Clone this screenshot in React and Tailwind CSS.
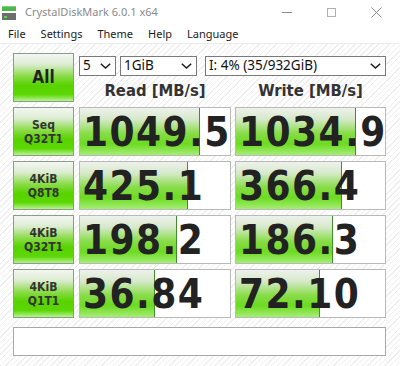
const results = [
  { size: "Seq", mode: "Q32T1", read: "1049.5", readBar: 120, write: "1034.9", writeBar: 120 },
  { size: "4KiB", mode: "Q8T8", read: "425.1", readBar: 108, write: "366.4", writeBar: 106 },
  { size: "4KiB", mode: "Q32T1", read: "198.2", readBar: 97, write: "186.3", writeBar: 97 },
  { size: "4KiB", mode: "Q1T1", read: "36.84", readBar: 75, write: "72.10", writeBar: 84 },
];

const bold = "font-['DejaVu_Sans_Condensed','DejaVu_Sans',sans-serif] font-bold";
const greenBtn =
  "border border-[#8c9c8a] bg-[linear-gradient(180deg,#f4f6f2_0%,#dcedd2_22%,#8edc4e_46%,#58d300_66%,#5cd704_86%,#b8f292_100%)]";

function Chevron() {
  return (
    <svg width="11" height="6" viewBox="0 0 11 6" className="shrink-0">
      <polyline points="0.8,0.8 5.5,5 10.2,0.8" fill="none" stroke="#1a1a1a" strokeWidth="1.5" />
    </svg>
  );
}

function Select({ value, className }) {
  return (
    <div className={`h-[20px] bg-white border border-[#7a7a7a] flex items-center justify-between pl-[3px] pr-[4px] ${className}`}>
      <span className="text-[13.5px] leading-none text-[#111]">{value}</span>
      <Chevron />
    </div>
  );
}

function ResultCell({ value, bar }) {
  return (
    <div className="relative bg-white border border-[#b9b9b9] flex items-center overflow-hidden">
      <div
        className="absolute left-0 top-0 bottom-0 border-r border-[#3f8f2a] bg-[linear-gradient(180deg,#eef1ec_0%,#d6e9ca_24%,#88dc48_54%,#6cdb20_76%,#a6ed76_100%)]"
        style={{ width: bar }}
      />
      <span className={`relative pl-[3px] text-[40px] leading-none tracking-[1.5px] text-[#222] ${bold}`}>{value}</span>
    </div>
  );
}

function AppIcon() {
  return (
    <svg width="14" height="16" viewBox="0 0 14 16">
      <rect x="0" y="1" width="14" height="5" fill="#4cb848" />
      <rect x="0" y="1" width="14" height="1" fill="#7fd07a" />
      <rect x="0" y="8" width="14" height="7" fill="#6d6d6d" />
      <rect x="2" y="11" width="3" height="2" fill="#5fd050" />
    </svg>
  );
}

export default function App() {
  return (
    <div className="w-[400px] h-[366px] bg-white overflow-hidden flex flex-col font-['Noto_Sans',sans-serif]">
      <div className="h-[25px] flex items-center shrink-0">
        <div className="pl-[2px] pr-[9px] flex items-center">
          <AppIcon />
        </div>
        <span className="text-[11px] text-[#8a8a8a]">CrystalDiskMark 6.0.1 x64</span>
        <div className="ml-auto flex mr-[1px] h-full">
          <div className="w-[45px] flex items-center justify-center">
            <div className="w-[10px] h-px bg-[#8a8a8a]" />
          </div>
          <div className="w-[45px] flex items-center justify-center">
            <div className="w-[9px] h-[9px] border border-[#b0b0b0]" />
          </div>
          <div className="w-[45px] flex items-center justify-center">
            <svg width="11" height="11" viewBox="0 0 11 11">
              <path d="M0.5 0.5 L10.5 10.5 M10.5 0.5 L0.5 10.5" stroke="#8a8a8a" strokeWidth="1" />
            </svg>
          </div>
        </div>
      </div>

      <div className="h-[19px] flex items-center gap-[15px] pl-[8px] text-[11px] text-[#1a1a1a] shrink-0 border-b border-[#ececec]">
        <span>File</span>
        <span>Settings</span>
        <span>Theme</span>
        <span>Help</span>
        <span>Language</span>
      </div>

      <div className="flex-1 pt-[9px] pl-[13px] bg-[repeating-linear-gradient(135deg,#ffffff_0px,#ffffff_3px,#eeeeee_3px,#eeeeee_4px)]">
        <div className="grid grid-cols-[61px_157px_155px] grid-rows-[49px_49px_49px_49px_49px] gap-y-[5px]">
          <div className={`${greenBtn} flex items-center justify-center`}>
            <span className={`text-[17px] text-[#222] ${bold}`}>All</span>
          </div>
          <div className="col-span-2 pl-[5px] flex flex-col">
            <div className="flex mt-[3px]">
              <Select value="5" className="w-[37px]" />
              <Select value="1GiB" className="w-[77px] ml-[4px]" />
              <Select value="I: 4% (35/932GiB)" className="w-[181px] ml-[8px]" />
            </div>
            <div className="grid grid-cols-[152px_151px] gap-x-[4px] mt-[5px]">
              <div className={`text-center text-[16.5px] leading-[20px] text-[#333] ${bold}`}>Read [MB/s]</div>
              <div className={`text-center text-[16.5px] leading-[20px] text-[#333] ${bold}`}>Write [MB/s]</div>
            </div>
          </div>

          {results.map((row) => (
            <div key={row.mode + row.read} className="contents">
              <div className={`${greenBtn} flex flex-col items-center justify-center text-[12px] leading-[14px] text-[#333] ${bold}`}>
                <span>{row.size}</span>
                <span>{row.mode}</span>
              </div>
              <div className="pl-[5px] grid">
                <ResultCell value={row.read} bar={row.readBar} />
              </div>
              <div className="pl-[4px] grid">
                <ResultCell value={row.write} bar={row.writeBar} />
              </div>
            </div>
          ))}
        </div>
        <div className="mt-[9px] w-[373px] h-[29px] bg-white border border-[#a8a8a8]" />
      </div>
    </div>
  );
}
